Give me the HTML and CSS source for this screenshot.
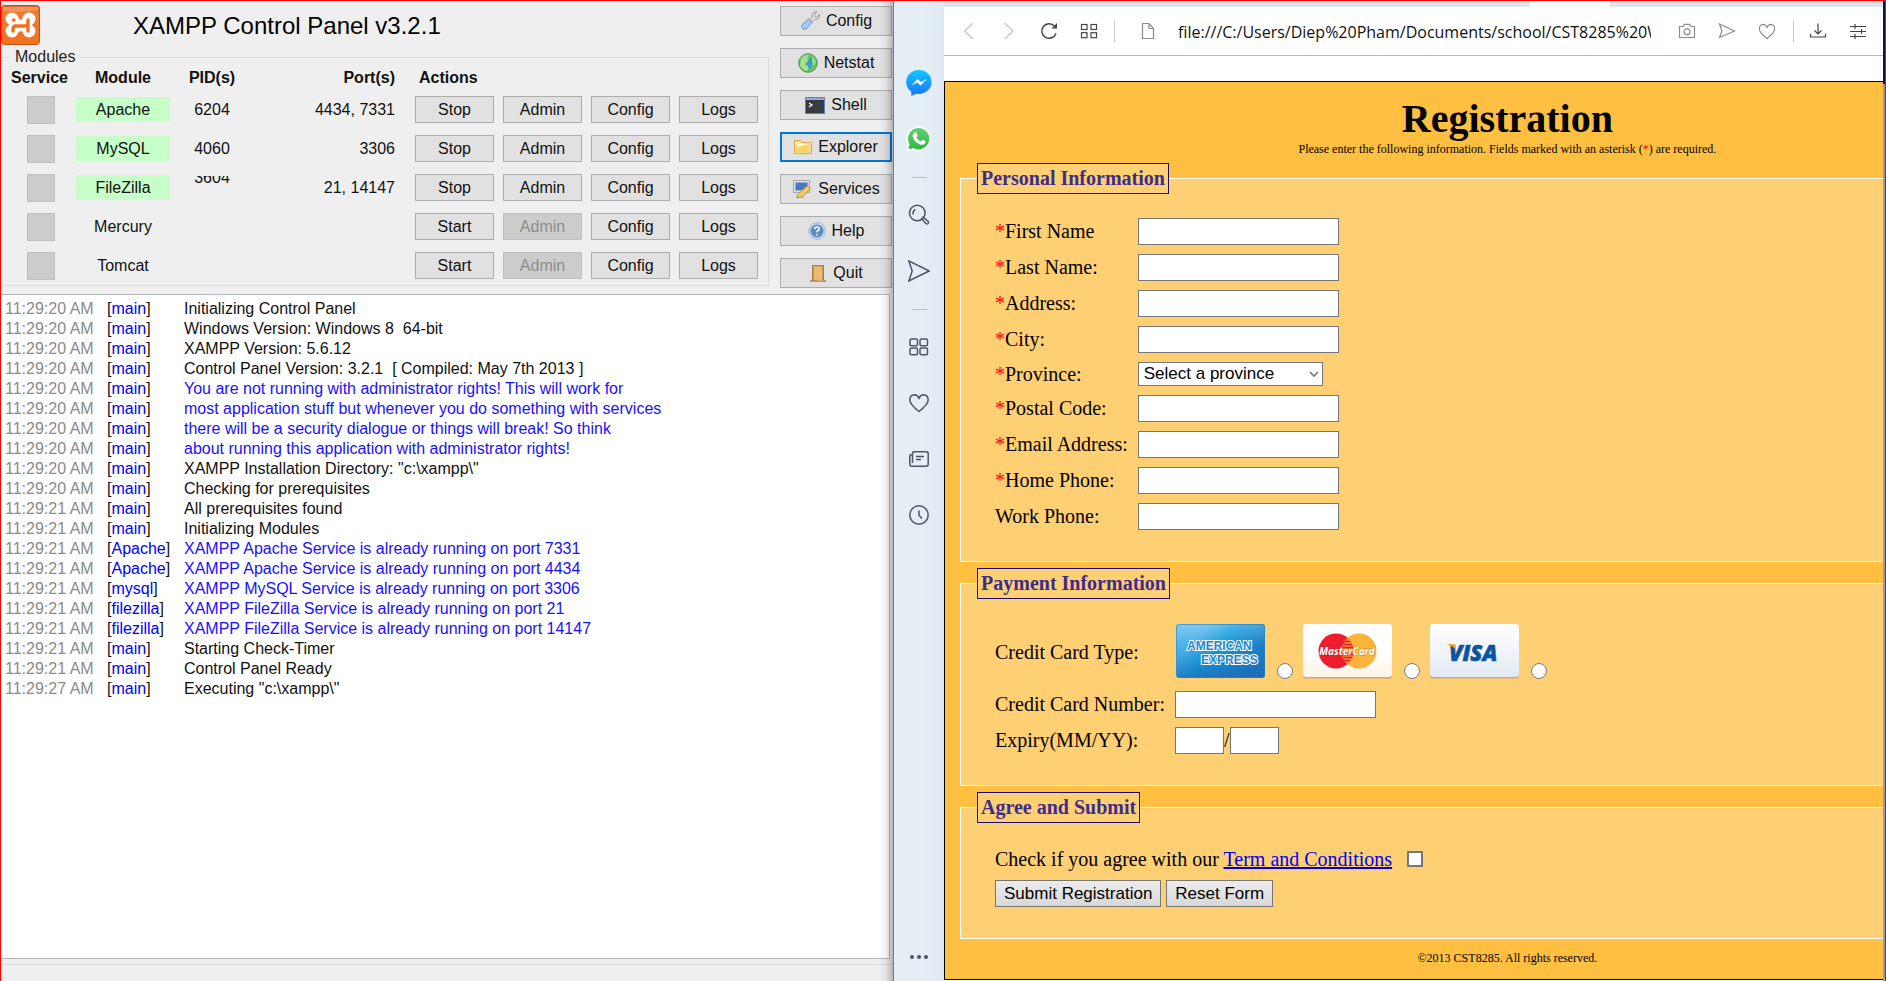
FILE: index.html
```html
<!DOCTYPE html>
<html lang="en">
<head>
<meta charset="utf-8">
<title>Registration</title>
<link rel="stylesheet" href="styles.css">
</head>
<body>
<main class="desktop">

<section class="panel" aria-label="XAMPP Control Panel">
  <div class="panel-top">
    <div class="panel-main">
      <header class="panel-header">
        <svg class="xampp-logo" viewBox="0 0 40 40" aria-hidden="true">
          <defs><linearGradient id="xo" x1="0" y1="0" x2="0" y2="1"><stop offset="0" stop-color="#d9662c"/><stop offset=".2" stop-color="#f07c34"/><stop offset="1" stop-color="#f5701c"/></linearGradient></defs>
          <rect x=".5" y=".5" width="38" height="39" rx="3" fill="url(#xo)" stroke="#b4541c"/>
          <path d="M2 2h35v3q-17 3-35 1z" fill="#f3a575" opacity=".7"/>
          <g fill="#fff"><circle cx="11" cy="14" r="6.5"/><circle cx="28" cy="14" r="6.5"/><circle cx="11" cy="26" r="6.5"/><circle cx="28" cy="26" r="6.5"/><path d="M7 15l6-4 7 4 7-4 6 4-2 5 2 5-6 4-7-3-7 3-6-4 2-5z"/></g>
          <g fill="none" stroke="#f5701c" stroke-width="3.4" stroke-linecap="round"><path d="M12 26v-2q0-3 3-3h9q3 0 3-3v-3M27 20v6"/><path d="M12.500 15h.5"/></g>
        </svg>
        <h1 class="panel-title">XAMPP Control Panel v3.2.1</h1>
      </header>
      <fieldset class="modules">
        <legend class="modules-legend">Modules</legend>
        <table class="modules-table">
          <thead><tr><th class="c-service">Service</th><th class="c-module">Module</th><th class="c-pid">PID(s)</th><th class="c-port">Port(s)</th><th class="c-actions">Actions</th></tr></thead>
          <tbody>
            <tr><td class="c-service"><button class="service" disabled aria-label="Apache service"></button></td><td class="c-module"><span class="name running">Apache</span></td><td class="c-pid">6204</td><td class="c-port">4434, 7331</td><td class="c-actions"><div class="actions"><button class="btn">Stop</button><button class="btn">Admin</button><button class="btn">Config</button><button class="btn">Logs</button></div></td></tr>
            <tr><td class="c-service"><button class="service" disabled aria-label="MySQL service"></button></td><td class="c-module"><span class="name running">MySQL</span></td><td class="c-pid">4060</td><td class="c-port">3306</td><td class="c-actions"><div class="actions"><button class="btn">Stop</button><button class="btn">Admin</button><button class="btn">Config</button><button class="btn">Logs</button></div></td></tr>
            <tr><td class="c-service"><button class="service" disabled aria-label="FileZilla service"></button></td><td class="c-module"><span class="name running">FileZilla</span></td><td class="c-pid pid-cut"><span class="cut">3604</span></td><td class="c-port">21, 14147</td><td class="c-actions"><div class="actions"><button class="btn">Stop</button><button class="btn">Admin</button><button class="btn">Config</button><button class="btn">Logs</button></div></td></tr>
            <tr><td class="c-service"><button class="service" disabled aria-label="Mercury service"></button></td><td class="c-module"><span class="name">Mercury</span></td><td class="c-pid"></td><td class="c-port"></td><td class="c-actions"><div class="actions"><button class="btn">Start</button><button class="btn" disabled>Admin</button><button class="btn">Config</button><button class="btn">Logs</button></div></td></tr>
            <tr><td class="c-service"><button class="service" disabled aria-label="Tomcat service"></button></td><td class="c-module"><span class="name">Tomcat</span></td><td class="c-pid"></td><td class="c-port"></td><td class="c-actions"><div class="actions"><button class="btn">Start</button><button class="btn" disabled>Admin</button><button class="btn">Config</button><button class="btn">Logs</button></div></td></tr>
          </tbody>
        </table>
      </fieldset>
    </div>
    <nav class="tools" aria-label="Tools">
      <button class="btn tool"><svg width="20" height="20" viewBox="0 0 20 20"><path d="M2.500 17.500q-2-2 0-4l6-5.500 3.500 3.500-5.500 6q-2 2-4 0z" fill="#a9c6f5" stroke="#6f93d6"/><path d="M9.500 8.500l3-2.500q-1-3 1-4.500 1.500-1 3.500-.5l-2.500 2.500 .5 2 2 .5 2.500-2.500q.8 2-.8 4-1.700 1.500-4.200.8l-2.500 2.700z" fill="#e4e4e4" stroke="#999"/></svg>Config</button>
      <button class="btn tool"><svg width="20" height="20" viewBox="0 0 20 20"><circle cx="10" cy="10" r="9.300" fill="#66c06a" stroke="#58965b"/><path d="M3 6q4-5 8-4l-2 4 3 2-3 3 2 3-2 4q-5-1-7-6z" fill="#a4e08f"/><path d="M10 8l3-4 3 2-1 5-4 6-1-4-3-2z" fill="#3f9bc4"/><path d="M14 3q4 3 4 7l-3 3-1-4z" fill="#8edb80"/></svg>Netstat</button>
      <button class="btn tool"><svg width="20" height="20" viewBox="0 0 20 20"><rect x=".5" y="2.500" width="19" height="16" fill="#383c42" stroke="#5b83cb"/><path d="M1 3h18v2H1z" fill="#8cacf0"/><path d="M16 3h2v1h-2z" fill="#d66"/><path d="M4 8l3 2-3 2" fill="none" stroke="#fff" stroke-width="1.300"/></svg>Shell</button>
      <button class="btn tool focused"><svg width="18" height="18" viewBox="0 0 18 18"><path d="M.5 15.500v-13h6l1.500 2h9.500v11z" fill="#fbe09a" stroke="#e3a64c"/><path d="M3 5h4l1 1.500h7V9H3z" fill="#fffbe8"/><path d="M2 14.500V9l6-1 2-1h6v7.500z" fill="#f8d566"/></svg>Explorer</button>
      <button class="btn tool"><svg width="20" height="20" viewBox="0 0 20 20"><rect x="1.500" y="1.500" width="16" height="12" fill="#dde0e6" stroke="#a5a9b2"/><rect x="3.500" y="3.500" width="12" height="8" fill="#4778c4"/><path d="M4 17h8v2H4z" fill="#bbb"/><path d="M5 19l1-4 9-8q2 0 3.500 3l-9 8z" fill="#f7c961" stroke="#b98a3b" stroke-width=".8"/></svg>Services</button>
      <button class="btn tool"><svg width="18" height="18" viewBox="0 0 18 18"><circle cx="9" cy="9" r="8.300" fill="#c8d9ee" stroke="#9db7d8"/><circle cx="9" cy="9" r="6.500" fill="#5c8fca"/><path d="M6.800 7q0-2 2.200-2t2.200 1.800q0 1-1.200 1.700-1 .6-1 1.700M9 12v1.500" fill="none" stroke="#fff" stroke-width="1.600"/></svg>Help</button>
      <button class="btn tool"><svg width="18" height="18" viewBox="0 0 18 18"><path d="M1 17h16" stroke="#a98252" stroke-width="1.500"/><path d="M3 1h12v15.500H3z" fill="#b3793a"/><path d="M4.500 2l9 .5V17l-9-1z" fill="#e8b975"/><circle cx="12" cy="9.500" r="1.100" fill="#ffe14d"/></svg>Quit</button>
    </nav>
  </div>
  <ol class="log">
    <li><time>11:29:20 AM</time><span class="tag">[<b>main</b>]</span><span>Initializing Control Panel</span></li>
    <li><time>11:29:20 AM</time><span class="tag">[<b>main</b>]</span><span>Windows Version: Windows 8  64-bit</span></li>
    <li><time>11:29:20 AM</time><span class="tag">[<b>main</b>]</span><span>XAMPP Version: 5.6.12</span></li>
    <li><time>11:29:20 AM</time><span class="tag">[<b>main</b>]</span><span>Control Panel Version: 3.2.1  [ Compiled: May 7th 2013 ]</span></li>
    <li><time>11:29:20 AM</time><span class="tag">[<b>main</b>]</span><span class="note">You are not running with administrator rights! This will work for</span></li>
    <li><time>11:29:20 AM</time><span class="tag">[<b>main</b>]</span><span class="note">most application stuff but whenever you do something with services</span></li>
    <li><time>11:29:20 AM</time><span class="tag">[<b>main</b>]</span><span class="note">there will be a security dialogue or things will break! So think</span></li>
    <li><time>11:29:20 AM</time><span class="tag">[<b>main</b>]</span><span class="note">about running this application with administrator rights!</span></li>
    <li><time>11:29:20 AM</time><span class="tag">[<b>main</b>]</span><span>XAMPP Installation Directory: "c:\xampp\"</span></li>
    <li><time>11:29:20 AM</time><span class="tag">[<b>main</b>]</span><span>Checking for prerequisites</span></li>
    <li><time>11:29:21 AM</time><span class="tag">[<b>main</b>]</span><span>All prerequisites found</span></li>
    <li><time>11:29:21 AM</time><span class="tag">[<b>main</b>]</span><span>Initializing Modules</span></li>
    <li><time>11:29:21 AM</time><span class="tag">[<b>Apache</b>]</span><span class="note">XAMPP Apache Service is already running on port 7331</span></li>
    <li><time>11:29:21 AM</time><span class="tag">[<b>Apache</b>]</span><span class="note">XAMPP Apache Service is already running on port 4434</span></li>
    <li><time>11:29:21 AM</time><span class="tag">[<b>mysql</b>]</span><span class="note">XAMPP MySQL Service is already running on port 3306</span></li>
    <li><time>11:29:21 AM</time><span class="tag">[<b>filezilla</b>]</span><span class="note">XAMPP FileZilla Service is already running on port 21</span></li>
    <li><time>11:29:21 AM</time><span class="tag">[<b>filezilla</b>]</span><span class="note">XAMPP FileZilla Service is already running on port 14147</span></li>
    <li><time>11:29:21 AM</time><span class="tag">[<b>main</b>]</span><span>Starting Check-Timer</span></li>
    <li><time>11:29:21 AM</time><span class="tag">[<b>main</b>]</span><span>Control Panel Ready</span></li>
    <li><time>11:29:27 AM</time><span class="tag">[<b>main</b>]</span><span>Executing "c:\xampp\"</span></li>
  </ol>
  <footer class="statusbar"></footer>
</section>

<section class="browser" aria-label="Browser">
  <nav class="sidebar" aria-label="Sidebar">
    <button class="side" aria-label="Messenger"><svg width="26" height="26" viewBox="0 0 26 26"><defs><linearGradient id="ms" x1="0" y1="0" x2="0" y2="1"><stop offset="0" stop-color="#13c7ff"/><stop offset="1" stop-color="#1a74ff"/></linearGradient></defs><path d="M13 0a12.700 12 0 1 1-3 23.700L5.300 26v-4.200A12 12 0 0 1 13 0z" fill="url(#ms)"/><path d="M5.500 15.500l6-6.500 3.500 3 5.800-3-6.300 6.500-3.300-3z" fill="#fff"/></svg></button>
    <button class="side" aria-label="WhatsApp"><svg width="26" height="26" viewBox="0 0 26 26"><defs><linearGradient id="wa" x1="0" y1="0" x2="0" y2="1"><stop offset="0" stop-color="#60d070"/><stop offset="1" stop-color="#2fb544"/></linearGradient></defs><path d="M1.200 24.500l1.500-6A11.500 11.500 0 1 1 7.500 23z" fill="url(#wa)" stroke="#fff" stroke-width="1.800"/><path d="M8 7q1.500-2 2.600 0l1 2.500q.2.700-1.200 2 1.500 2.800 4.400 3.900 1.400-2 2-1.700l2.600 1.400q.7.500-.5 2.500-2.300 2.200-6 .3-5-2.400-6.400-7.600Q6.300 8.500 8 7z" fill="#fff"/></svg></button>
    <hr class="side-rule">
    <button class="side" aria-label="Search"><svg width="22" height="22" viewBox="0 0 22 22"><circle cx="9.300" cy="9" r="7.800"/><path d="M5.300 10.500q-1-3.500 2-5M14.500 12.500l5.500 4.800q1 1.200 0 2.200-1.200 1-2.200 0l-4.600-5.500"/></svg></button>
    <button class="side" aria-label="My Flow"><svg width="22" height="22" viewBox="0 0 22 22"><path d="M.8.800l20.400 10.200L.8 21l3.400-10z"/></svg></button>
    <hr class="side-rule">
    <button class="side" aria-label="Speed Dial"><svg width="20" height="18" viewBox="0 0 20 18"><rect x="1" y="1" width="7.500" height="6.700" rx="1.500"/><rect x="11" y="1" width="7.500" height="6.700" rx="1.500"/><rect x="1" y="10" width="7.500" height="6.700" rx="1.500"/><rect x="11" y="10" width="7.500" height="6.700" rx="1.500"/></svg></button>
    <button class="side" aria-label="Bookmarks"><svg width="20" height="20" viewBox="0 0 20 20"><path d="M10 18.500Q1 11.500.8 7 1 2 5.500 1.800q3 .2 4.500 3.400 1.500-3.200 4.500-3.400Q19 2 19.200 7 19 11.500 10 18.500z"/></svg></button>
    <button class="side" aria-label="News"><svg width="20" height="16" viewBox="0 0 20 16"><path d="M4.500.8h12.700q2 0 2 2v10.400q0 2-2 2H2.800q-2 0-2-2V5.500q0-2 2-2h.7M3.500 12V2.500q0-1.700 1.700-1.700M7 5.500h8M7 8.500h5"/></svg></button>
    <button class="side" aria-label="History"><svg width="20" height="20" viewBox="0 0 20 20"><circle cx="10" cy="10" r="9.200"/><path d="M10 5.500v4.800l3 3.200"/></svg></button>
    <button class="side side-more" aria-label="More"><svg width="20" height="6" viewBox="0 0 20 6"><g fill="#4d5566" stroke="none"><circle cx="3" cy="3" r="2"/><circle cx="10" cy="3" r="2"/><circle cx="17" cy="3" r="2"/></g></svg></button>
  </nav>
  <div class="view">
    <div class="tabs"><div class="tab"></div></div>
    <div class="toolbar">
      <button class="tb faint" aria-label="Back"><svg width="20" height="18" viewBox="0 0 20 18"><path d="M14 1L5.500 9l8.500 8"/></svg></button>
      <button class="tb faint" aria-label="Forward"><svg width="20" height="18" viewBox="0 0 20 18"><path d="M5.500 1L14 9l-8.500 8"/></svg></button>
      <button class="tb" aria-label="Reload"><svg width="18" height="18" viewBox="0 0 18 18"><path d="M16 11.500A7.300 7.300 0 1 1 14.500 4" stroke-width="1.500"/><path d="M17 1v5.500h-5.500z" fill="#444" stroke="none"/></svg></button>
      <button class="tb" aria-label="Tab tiles"><svg width="18" height="16" viewBox="0 0 18 16"><rect x="1.500" y="1.500" width="5.500" height="5"/><rect x="11" y="1.500" width="5.500" height="5"/><rect x="1.500" y="9.700" width="5.500" height="5"/><rect x="11" y="9.700" width="5.500" height="5"/></svg></button>
      <span class="tb-rule"></span>
      <button class="tb soft tb-page" aria-label="Page info"><svg width="14" height="18" viewBox="0 0 14 18"><path d="M1.500 1.500h6.500l4.500 5v10h-11zM8 1.500v5h4.500"/></svg></button>
      <input class="url" type="text" aria-label="Address" readonly value="file:///C:/Users/Diep%20Pham/Documents/school/CST8285%20Web%20Programming/registration.html">
      <button class="tb soft" aria-label="Snapshot"><svg width="18" height="16" viewBox="0 0 18 16"><path d="M1.500 3.500h3.500l1.500-2.200h5l1.500 2.200h3.500v11h-15z"/><circle cx="9" cy="8.800" r="3"/></svg></button>
      <button class="tb soft" aria-label="Send"><svg width="18" height="16" viewBox="0 0 18 16"><path d="M1.500 1L16.500 8l-15 6.500L4 8z"/></svg></button>
      <button class="tb soft" aria-label="Save to bookmarks"><svg width="18" height="17" viewBox="0 0 18 17"><path d="M9 15.500Q1.500 10 1.300 5.800 1.500 1.500 5 1.300q2.800.2 4 3 1.200-2.800 4-3 3.500.2 3.700 4.500Q16.500 10 9 15.500z"/></svg></button>
      <span class="tb-rule tb-rule-end"></span>
      <button class="tb" aria-label="Downloads"><svg width="18" height="16" viewBox="0 0 18 16"><path d="M9 .5v10M5.500 7.500L9 11l3.500-3.500M1.500 11v3h15v-3"/></svg></button>
      <button class="tb" aria-label="Easy setup"><svg width="18" height="16" viewBox="0 0 18 16"><path d="M1 3.500h16M1 8.500h16M1 13.500h16M6 1v5M12.500 6v5M6 11v5"/></svg></button>
    </div>
    <div class="viewport">
      <form class="page">
        <h2 class="page-title">Registration</h2>
        <p class="intro">Please enter the following information. Fields marked with an asterisk (<span class="star">*</span>) are required.</p>

        <fieldset class="group">
          <legend class="group-legend">Personal Information</legend>
          <div class="fields">
            <label for="first"><span class="star">*</span>First Name</label><input class="text" id="first" type="text">
            <label for="last"><span class="star">*</span>Last Name:</label><input class="text" id="last" type="text">
            <label for="address"><span class="star">*</span>Address:</label><input class="text" id="address" type="text">
            <label for="city"><span class="star">*</span>City:</label><input class="text" id="city" type="text">
            <label for="province"><span class="star">*</span>Province:</label>
            <span class="select-wrap"><select class="select" id="province"><option>Select a province</option></select><svg class="chevron" width="10" height="8" viewBox="0 0 10 8" aria-hidden="true"><path d="M1 2l4 4 4-4" fill="none" stroke="#767676" stroke-width="1.600"/></svg></span>
            <label for="postal"><span class="star">*</span>Postal Code:</label><input class="text" id="postal" type="text">
            <label for="email"><span class="star">*</span>Email Address:</label><input class="text" id="email" type="text">
            <label for="home"><span class="star">*</span>Home Phone:</label><input class="text" id="home" type="text">
            <label for="work">Work Phone:</label><input class="text" id="work" type="text">
          </div>
        </fieldset>

        <fieldset class="group">
          <legend class="group-legend">Payment Information</legend>
          <div class="fields">
            <span>Credit Card Type:</span>
            <div class="cards">
              <label class="card"><svg width="91" height="56" viewBox="0 0 91 56" role="img" aria-label="American Express"><defs><linearGradient id="ax" x1="0" y1="0" x2="1" y2=".5"><stop offset="0" stop-color="#5ab8ec"/><stop offset=".3" stop-color="#55b5ea"/><stop offset=".55" stop-color="#109bdc"/><stop offset="1" stop-color="#1972bc"/></linearGradient><linearGradient id="ay" x1="0" y1="0" x2="0" y2="1"><stop offset="0" stop-color="#fff" stop-opacity=".25"/><stop offset=".45" stop-color="#0d94d8" stop-opacity=".2"/><stop offset="1" stop-color="#2268b4" stop-opacity=".7"/></linearGradient></defs><rect x="1" y="1" width="89" height="54" rx="3" fill="url(#ax)"/><rect x="1.500" y="1.500" width="88" height="53" rx="3" fill="url(#ay)" stroke="#2b83c0" stroke-opacity=".6"/><g class="amex"><text x="12" y="27">AMERICAN</text><text x="26" y="41">EXPRESS</text></g></svg><input class="radio" type="radio" name="card" aria-label="American Express"></label>
              <label class="card"><svg width="91" height="56" viewBox="0 0 91 56" role="img" aria-label="MasterCard"><defs><linearGradient id="mc" x1="0" y1="0" x2="0" y2="1"><stop offset="0" stop-color="#fff"/><stop offset=".5" stop-color="#fff"/><stop offset="1" stop-color="#fff4e8"/></linearGradient></defs><rect x="1" y="1.500" width="89" height="54" rx="3" fill="#c9ab74"/><rect x="1" y="1" width="89" height="53" rx="3" fill="url(#mc)"/><circle cx="57" cy="28" r="17.500" fill="#fdb338"/><circle cx="34" cy="28" r="17.500" fill="#ee1c2e"/><path d="M45.500 14.500q6 5 6 13.500t-6 13.500q-6-5-6-13.500t6-13.500z" fill="#f58a32"/><path d="M42 18.500h6M41 21.500h9M40 24.500h11M40 31.500h11M41 34.500h9M42 37.500h6" stroke="#ee1c2e" stroke-width="1.500"/><text class="mc" x="45" y="32" text-anchor="middle">MasterCard</text></svg><input class="radio" type="radio" name="card" aria-label="MasterCard"></label>
              <label class="card"><svg width="91" height="56" viewBox="0 0 91 56" role="img" aria-label="Visa"><defs><linearGradient id="vi" x1="0" y1="0" x2="0" y2="1"><stop offset="0" stop-color="#fff"/><stop offset="1" stop-color="#e3eaf4"/></linearGradient></defs><rect x="1" y="1.500" width="89" height="54" rx="3" fill="#c9ab74"/><rect x="1" y="1" width="89" height="53" rx="3" fill="url(#vi)"/><text class="visa" x="20" y="38">VISA</text><path d="M17.500 21h6q2.500 0 3 2l1 5q-2.500-5-10-7z" fill="#f9a61c"/></svg><input class="radio" type="radio" name="card" aria-label="Visa"></label>
            </div>
            <label for="number">Credit Card Number:</label><input class="text" id="number" type="text">
            <label for="month">Expiry(MM/YY):</label>
            <div class="expiry"><input class="text short" id="month" type="text">/<input class="text short" type="text" aria-label="Expiry year"></div>
          </div>
        </fieldset>

        <fieldset class="group">
          <legend class="group-legend">Agree and Submit</legend>
          <div class="submit">
            <div class="agree"><label for="agree">Check if you agree with our <a href="#terms">Term and Conditions</a></label><input class="check" id="agree" type="checkbox"></div>
            <div class="buttons"><button class="form-btn" type="button">Submit Registration</button><button class="form-btn" type="reset">Reset Form</button></div>
          </div>
        </fieldset>
        <footer class="page-footer">©2013 CST8285. All rights reserved.</footer>
      </form>
    </div>
  </div>
  <div class="edge"></div>
</section>

</main>
</body>
</html>
```
FILE: styles.css
```css
* { box-sizing: border-box; }

body {
  margin: 0;
  font: 16px/18px "Liberation Sans", Arial, sans-serif;
  color: #111;
}

button, input, select { font: inherit; color: inherit; margin: 0; }

.desktop {
  display: grid;
  grid-template-columns: 893fr 991fr;
  min-height: 100vh;
  border: 1px solid #f00;
  background: #fff;
}

/* Control panel */
.panel {
  position: relative;
  display: flex;
  flex-direction: column;
  min-width: 0;
  background: #efefef;
  border-right: 1px solid #777;
}

.panel::after {
  content: "";
  position: absolute;
  inset: 0 0 0 auto;
  width: 14px;
  background: linear-gradient(to right, rgba(0, 0, 0, 0), rgba(0, 0, 0, 0.06) 50%, rgba(0, 0, 0, 0.24));
  pointer-events: none;
}

.panel-top {
  display: grid;
  grid-template-columns: 1fr 112px;
  gap: 11px;
  padding: 4px 1px 0 0;
}

.panel-header { display: flex; align-items: center; }
.xampp-logo { width: 40px; height: 40px; display: block; }
.panel-title { margin: 2px 0 0 92px; font-size: 24px; line-height: 28px; font-weight: 400; color: #000; }

.modules {
  margin: 3px 0 2px;
  padding: 0;
  border: 1px solid #dcdcdc;
  border-left: 0;
  min-width: 0;
}

.modules-legend { margin-left: 9px; padding: 0 5px; color: #222; }
.modules-table { width: 100%; border-collapse: collapse; table-layout: fixed; }
.modules-table th { height: 24px; padding: 0; font-weight: 700; }
.modules-table td { height: 39px; padding: 0; text-align: center; }
.modules-table .c-service { width: 75px; padding-left: 5px; }
.modules-table th.c-service { padding-left: 2px; }
.c-module { width: 94px; }
.c-pid { width: 84px; }
.modules-table .c-port { width: 141px; text-align: right; }
.modules-table .c-actions { padding-left: 20px; text-align: left; }
.modules-table th.c-actions { padding-left: 24px; }

.pid-cut { vertical-align: top; }
.cut { display: flex; align-items: flex-end; justify-content: center; height: 11px; margin-top: 8px; overflow: hidden; }

.service { display: block; width: 28px; height: 28px; margin: 0 auto; background: #ccc; border: 1px solid #bfbfbf; }
.name { display: block; line-height: 25px; }
.running { background: #c8ffc8; }
.actions { display: flex; gap: 9px; }

.btn {
  width: 79px;
  height: 27px;
  padding: 0;
  background: #e1e1e1;
  border: 1px solid #adadad;
  text-align: center;
}

.btn:disabled { background: #ccc; border-color: #bfbfbf; color: #8e8e8e; }

.tools { display: flex; flex-direction: column; justify-content: space-between; padding-top: 1px; }
.tool { display: flex; align-items: center; justify-content: center; gap: 6px; width: 100%; height: 30px; }
.focused { border: 2px solid #0078d7; }

.log {
  flex: 1;
  margin: 6px 3px 5px 0;
  padding: 4px 0;
  list-style: none;
  background: #fff;
  border: 1px solid #b4b8bd;
  border-left: 0;
}

.log li {
  display: grid;
  grid-template-columns: 102px 77px 1fr;
  padding-left: 4px;
  line-height: 20px;
  white-space: pre;
}

.log time { color: #8a8a8a; }
.tag b { font-weight: 400; color: #0000ff; }
.note { color: #1a10ff; }
.statusbar { height: 17px; border-top: 1px solid #dadada; }

/* Browser */
.browser { display: grid; grid-template-columns: 50px 1fr 2px; min-width: 0; }
.edge { background: linear-gradient(#0a0f5c 83px, #9b9b9b 83px); }

.sidebar {
  display: flex;
  flex-direction: column;
  padding: 54px 0 4px;
  background: linear-gradient(to right, #e5edf5 60%, #e0e9f2);
}

.side {
  display: flex;
  align-items: center;
  justify-content: center;
  height: 56px;
  padding: 0;
  border: 0;
  background: none;
}

.side svg { fill: none; stroke: #4d5566; stroke-width: 1.5; }
.side svg path[fill]:not([stroke]) { stroke: none; }
.side-rule { width: 15px; height: 1px; margin: 10px auto 9px; border: 0; background: #b3c2d1; }
.side-more { height: 40px; margin-top: auto; }

.view { display: flex; flex-direction: column; min-width: 0; background: #fff; }
.tabs { height: 6px; background: #dde4ec; }
.tab { width: 80px; height: 6px; margin-left: 62.4%; background: #fff; }

.toolbar {
  display: flex;
  align-items: center;
  height: 49px;
  padding: 0 5px;
  border-bottom: 1px solid #b4bcc6;
}

.tb {
  flex: none;
  display: flex;
  align-items: center;
  justify-content: center;
  width: 40px;
  height: 40px;
  padding: 0;
  border: 0;
  background: none;
}

.tb svg { fill: none; stroke: #444; stroke-width: 1.2; }
.soft svg { stroke: #8c8c8c; }
.faint svg { stroke: #c4c4c4; }
.tb-rule { flex: none; width: 1px; height: 22px; margin: 0 13px 0 5px; background: #ccc; }
.tb-rule-end { margin: 0 4px 0 6px; }

.url {
  flex: 1;
  min-width: 0;
  margin: 2px 16px 0 10px;
  padding: 0;
  border: 0;
  outline: 0;
  background: none;
  font: 16px/22px "Open Sans", "Noto Sans", sans-serif;
  color: #111;
}

.viewport { flex: 1; display: flex; overflow: hidden; padding: 25px 0 1px; }

/* The page is laid out wider than the viewport that shows it */
.page {
  flex: none;
  width: 120%;
  padding: 14px 15px 0;
  background: #ffbf40;
  border: 1px solid #000;
  font: 20px/23px "Liberation Serif", "Times New Roman", serif;
  color: #000;
}

.page-title { margin: 0; font-size: 40px; line-height: 46px; text-align: center; }
.intro { margin: 0 0 6px; font-size: 12px; line-height: 15px; text-align: center; }
.star { color: #f00; }

.group {
  margin: 0 0 6px;
  padding: 24px 16px 31px 34px;
  border: 1px solid #fff;
  background: #ffcf73;
}

.group-legend {
  margin-left: -18px;
  padding: 3px;
  background: #ffcf73;
  border: 1px solid #1f0a6e;
  color: #3d2c8c;
  font-weight: 700;
}

.fields { display: grid; grid-template-columns: max-content 1fr; gap: 9px 10px; align-items: center; justify-items: start; }
.text { display: block; width: 201px; height: 27px; padding: 1px 3px; background: #fff; border: 1px solid #767676; border-radius: 0; font: 17px/19px "Liberation Sans", Arial, sans-serif; }
.short { width: 49px; }
.expiry { display: flex; align-items: center; }

.select-wrap { position: relative; height: 24px; }
.select {
  appearance: none;
  display: block;
  width: 185px;
  height: 24px;
  padding: 0 5px;
  background: #fff;
  border: 1px solid #767676;
  border-radius: 0;
  font: 17px/20px "Liberation Sans", Arial, sans-serif;
  color: #000;
}
.chevron { position: absolute; right: 4px; top: 8px; pointer-events: none; }

.cards { display: flex; gap: 9px; padding-bottom: 3px; }
.card { display: flex; align-items: flex-end; gap: 11px; }
.radio { width: 16px; height: 16px; }

.amex { font: 700 12px/14px "Liberation Sans", Arial, sans-serif; fill: #1c86cc; stroke: #fff; stroke-width: 2px; paint-order: stroke; }
.mc { font: italic 700 10px/14px "Open Sans", sans-serif; fill: #fff; stroke: #7a3b20; stroke-opacity: 0.4; stroke-width: 1px; paint-order: stroke; }
.visa { font: italic 800 22px/26px "Open Sans", sans-serif; fill: #0b54a0; stroke: #0b54a0; stroke-width: 0.6px; }

.submit { display: flex; flex-direction: column; gap: 9px; }
.agree { display: flex; align-items: center; height: 24px; gap: 15px; }
.agree a { color: #0000ee; }
.check { appearance: none; width: 16px; height: 16px; background: #fff; border: 2px solid #767676; }
.buttons { display: flex; gap: 5px; }

.form-btn {
  height: 27px;
  padding: 0 8px;
  background: linear-gradient(#ececec, #d8d8d8);
  border: 1px solid #767676;
  font: 17px/20px "Liberation Sans", Arial, sans-serif;
}

.page-footer { padding: 6px 0 13px; font-size: 12px; line-height: 15px; text-align: center; }
```
